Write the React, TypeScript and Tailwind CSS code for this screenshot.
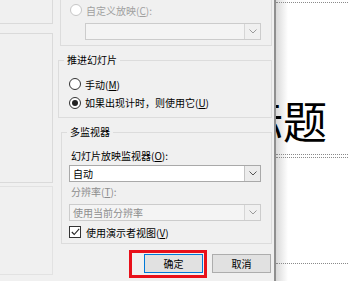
import React from 'react';

const Chevron = ({ color = '#606060' }: { color?: string }) => (
  <svg width="8" height="5" viewBox="0 0 8 5" fill="none">
    <polyline points="0.5,0.5 4,4 7.5,0.5" stroke={color} strokeWidth="1" />
  </svg>
);

function Radio({ checked, disabled }: { checked?: boolean; disabled?: boolean }) {
  return (
    <span
      className={`flex h-[12px] w-[12px] shrink-0 items-center justify-center rounded-full border bg-white ${
        disabled ? 'border-[#c6c6c6] bg-[#f7f7f7]' : 'border-[#333333]'
      }`}
    >
      {checked && <span className="h-[6px] w-[6px] rounded-full bg-[#222222]" />}
    </span>
  );
}

function Select({ value, disabled }: { value?: string; disabled?: boolean }) {
  return (
    <div
      className={`flex h-[17px] items-stretch border ${
        disabled ? 'border-[#cccccc] bg-[#f4f4f4]' : 'border-[#a9a9a9] bg-white'
      }`}
    >
      <span className={`flex-1 pl-[3px] leading-[15px] ${disabled ? 'text-[#8d8d8d]' : 'text-black'}`}>
        {value}
      </span>
      <span
        className={`flex w-[16px] items-center justify-center border-l ${
          disabled ? 'border-[#d6d6d6] bg-[#f0f0f0]' : 'border-[#c4c4c4] bg-[#ececec]'
        }`}
      >
        <Chevron color={disabled ? '#9a9a9a' : '#555555'} />
      </span>
    </div>
  );
}

function GroupTitle({ children }: { children: React.ReactNode }) {
  return (
    <span className="absolute left-[5px] top-[-8px] bg-[#f0f0f0] px-[3px] leading-[14px] text-black">
      {children}
    </span>
  );
}

export default function App() {
  return (
    <div className="relative flex h-[281px] w-[348px] overflow-hidden bg-white font-['Noto_Sans_CJK_SC',sans-serif] text-[10px]">
      {/* dialog */}
      <div className="flex h-full w-[274px] shrink-0 bg-[#f0f0f0]">
        {/* left column remnants */}
        <div className="flex w-[53px] shrink-0 flex-col">
          <div className="h-[24px] border-b border-r border-[#dadada]" />
          <div className="mt-[9px] h-[150px] border-y border-r border-[#dadada]" />
          <div className="mt-[3px] h-[89px] border-y border-r border-[#e2e2e2]" />
        </div>

        {/* main column */}
        <div className="flex w-[221px] shrink-0 flex-col pl-[5px] pr-[2px]">
          {/* custom show group */}
          <div className="ml-[2px] flex h-[46px] flex-col border-x border-b border-[#dcdcdc] pl-[9px] pr-[10px]">
            <div className="flex h-[20px] items-center gap-[4px] text-[#a0a0a0]">
              <Radio disabled />
              <span>
                自定义放映(<u>C</u>):
              </span>
            </div>
            <div className="ml-[15px] mt-[3px]">
              <Select disabled />
            </div>
          </div>

          {/* advance slides */}
          <div className="relative mt-[14px] flex h-[58px] flex-col border border-[#dcdcdc] pl-[10px]">
            <GroupTitle>推进幻灯片</GroupTitle>
            <div className="mt-[14px] flex h-[18px] items-center gap-[4px] text-black">
              <Radio />
              <span>
                手动(<u>M</u>)
              </span>
            </div>
            <div className="flex h-[19px] items-center gap-[4px] text-black">
              <Radio checked />
              <span>
                如果出现计时，则使用它(<u>U</u>)
              </span>
            </div>
          </div>

          {/* monitors */}
          <div className="relative ml-[3px] mt-[14px] flex h-[112px] flex-col border border-[#dcdcdc] pl-[7px] pr-[10px]">
            <GroupTitle>多监视器</GroupTitle>
            <div className="ml-[2px] mt-[15px] h-[16px] leading-[16px] text-black">
              幻灯片放映监视器(<u>O</u>):
            </div>
            <div className="mt-[1px]">
              <Select value="自动" />
            </div>
            <div className="ml-[2px] mt-[2px] h-[16px] leading-[16px] text-[#8d8d8d]">
              分辨率(<u>T</u>):
            </div>
            <div className="mt-[4px]">
              <Select value="使用当前分辨率" disabled />
            </div>
            <div className="mt-[4px] flex h-[14px] items-center gap-[4px] text-black">
              <span className="flex h-[12px] w-[12px] items-center justify-center border border-[#333333] bg-white">
                <svg width="9" height="8" viewBox="0 0 9 8" fill="none">
                  <polyline points="0.8,4 3.2,6.5 8.2,0.8" stroke="#222" strokeWidth="1.1" />
                </svg>
              </span>
              <span className="ml-[1px]">
                使用演示者视图(<u>V</u>)
              </span>
            </div>
          </div>

          {/* buttons */}
          <div className="mt-[10px] flex justify-end gap-[9px] pr-[1px]">
            <button className="h-[19px] w-[59px] border border-[#0078d7] bg-[#e1e1e1] text-[10px] leading-[17px] text-black">
              确定
            </button>
            <button className="h-[19px] w-[59px] border border-[#adadad] bg-[#e1e1e1] text-[10px] leading-[17px] text-black">
              取消
            </button>
          </div>
        </div>
      </div>

      {/* dialog edge */}
      <div className="h-full w-[2px] shrink-0 bg-[#8f8f8f]" />

      {/* slide */}
      <div className="relative flex h-full flex-1 flex-col overflow-hidden bg-white">
        <div className="pointer-events-none absolute inset-y-0 left-0 w-[12px] bg-gradient-to-r from-[#d9d9d9] to-transparent" />
        <div className="relative mt-[2px] h-[153px] border-y border-dotted border-[#8a8a8a]">
          <div className="ml-[-37px] whitespace-nowrap pt-[95px] text-[44px] leading-[44px] text-black">
            标题
          </div>
        </div>
        <div className="relative mt-[2px] h-[107px] border-y border-dotted border-[#8a8a8a]" />
      </div>

      {/* red highlight annotation */}
      <div className="pointer-events-none absolute left-[129px] top-[250px] h-[28px] w-[78px] border-[3px] border-[#e8101a]" />
    </div>
  );
}
